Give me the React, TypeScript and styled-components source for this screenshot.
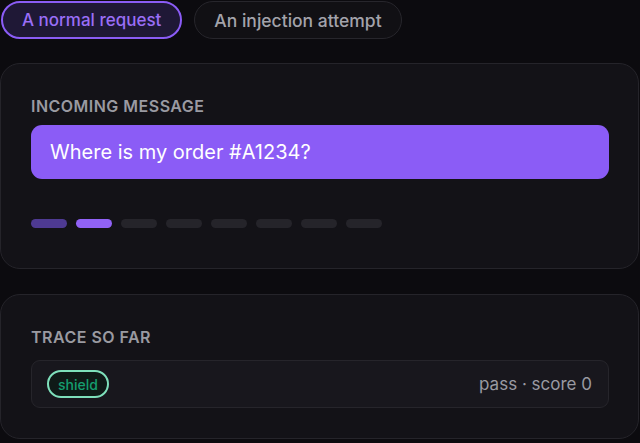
import React from "react";
import styled, { createGlobalStyle } from "styled-components";

const GlobalStyle = createGlobalStyle`
  html, body {
    margin: 0;
    padding: 0;
    background: #0c0b0f;
    font-family: Inter, "Noto Sans", sans-serif;
    -webkit-font-smoothing: antialiased;
  }
  * { box-sizing: border-box; }
`;

const Page = styled.div`
  width: 640px;
  height: 443px;
  overflow: hidden;
  padding: 1px 1px 0 0;
  display: flex;
  flex-direction: column;
  gap: 24px;
`;

const Tabs = styled.div`
  display: flex;
  gap: 12px;
  padding-left: 1px;
`;

const Tab = styled.button<{ $active?: boolean }>`
  height: 38px;
  padding: 0 19px;
  border-radius: 999px;
  font-family: Inter, sans-serif;
  font-size: ${(p) => (p.$active ? 17 : 17.5)}px;
  font-weight: ${(p) => (p.$active ? 500 : 450)};
  cursor: pointer;
  border: ${(p) => (p.$active ? "2px solid #8b5cf6" : "1.5px solid #27262c")};
  background: ${(p) => (p.$active ? "#1f1836" : "#111014")};
  color: ${(p) => (p.$active ? "#9a6ef7" : "#a3a3ab")};
`;

const Cards = styled.div`
  display: flex;
  flex-direction: column;
  gap: 25px;
`;

const Card = styled.section<{ $padBottom: number }>`
  background: #131217;
  border: 1px solid #25242a;
  border-radius: 20px;
  padding: 32px 29px ${(p) => p.$padBottom}px 30px;
  display: flex;
  flex-direction: column;
`;

const Label = styled.div<{ $gap: number }>`
  font-size: 16px;
  font-weight: 560;
  letter-spacing: 0.03em;
  text-transform: uppercase;
  color: #9a9aa1;
  margin-bottom: ${(p) => p.$gap}px;
`;

const Message = styled.div`
  background: #8b5cf6;
  border-radius: 11px;
  padding: 15px 19px;
  font-size: 20px;
  font-weight: 400;
  color: #ffffff;
`;

const Progress = styled.div`
  display: flex;
  gap: 9px;
  margin-top: 40px;
`;

const Segment = styled.div<{ $state: "done" | "active" | "todo" }>`
  width: 36px;
  height: 9px;
  border-radius: 999px;
  background: ${(p) =>
    p.$state === "done" ? "#4e3a92" : p.$state === "active" ? "#9162f6" : "#25242a"};
`;

const TraceRow = styled.div`
  height: 48px;
  background: #18171d;
  border: 1px solid #26252b;
  border-radius: 9px;
  padding: 0 16px 0 15px;
  display: flex;
  align-items: center;
  justify-content: space-between;
`;

const StageTag = styled.span`
  height: 28px;
  padding: 0 9px;
  border-radius: 999px;
  border: 2px solid #7ee0bb;
  background: #0f1a17;
  color: #159e6f;
  font-size: 14px;
  font-weight: 500;
  display: inline-flex;
  align-items: center;
`;

const Result = styled.span`
  font-size: 17px;
  color: #9a9aa2;
`;

const steps: Array<"done" | "active" | "todo"> = [
  "done",
  "active",
  "todo",
  "todo",
  "todo",
  "todo",
  "todo",
  "todo",
];

export default function App() {
  return (
    <>
      <GlobalStyle />
      <Page>
        <Tabs>
          <Tab $active>A normal request</Tab>
          <Tab>An injection attempt</Tab>
        </Tabs>
        <Cards>
          <Card $padBottom={40}>
            <Label $gap={9}>Incoming message</Label>
            <Message>Where is my order #A1234?</Message>
            <Progress>
              {steps.map((s, i) => (
                <Segment key={i} $state={s} />
              ))}
            </Progress>
          </Card>
          <Card $padBottom={30}>
            <Label $gap={13}>Trace so far</Label>
            <TraceRow>
              <StageTag>shield</StageTag>
              <Result>pass · score 0</Result>
            </TraceRow>
          </Card>
        </Cards>
      </Page>
    </>
  );
}
